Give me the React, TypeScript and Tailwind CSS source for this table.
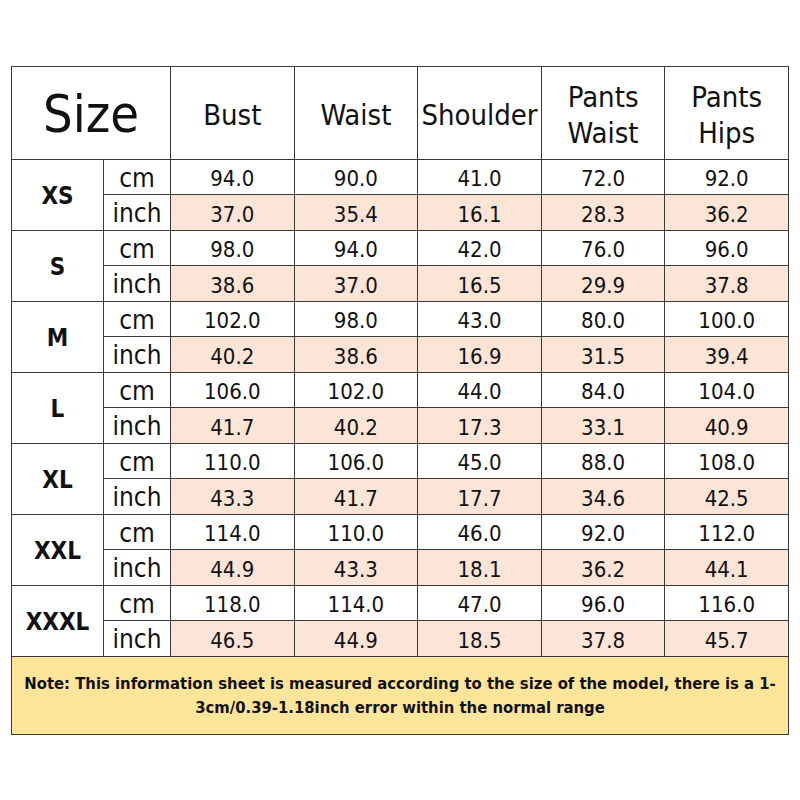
import React from "react";

const rows: [string, string[], string[]][] = [
  ["XS", ["94.0", "90.0", "41.0", "72.0", "92.0"], ["37.0", "35.4", "16.1", "28.3", "36.2"]],
  ["S", ["98.0", "94.0", "42.0", "76.0", "96.0"], ["38.6", "37.0", "16.5", "29.9", "37.8"]],
  ["M", ["102.0", "98.0", "43.0", "80.0", "100.0"], ["40.2", "38.6", "16.9", "31.5", "39.4"]],
  ["L", ["106.0", "102.0", "44.0", "84.0", "104.0"], ["41.7", "40.2", "17.3", "33.1", "40.9"]],
  ["XL", ["110.0", "106.0", "45.0", "88.0", "108.0"], ["43.3", "41.7", "17.7", "34.6", "42.5"]],
  ["XXL", ["114.0", "110.0", "46.0", "92.0", "112.0"], ["44.9", "43.3", "18.1", "36.2", "44.1"]],
  ["XXXL", ["118.0", "114.0", "47.0", "96.0", "116.0"], ["46.5", "44.9", "18.5", "37.8", "45.7"]],
];

const headers: string[][] = [["Bust"], ["Waist"], ["Shoulder"], ["Pants", "Waist"], ["Pants", "Hips"]];

export default function App() {
  return (
    <div
      className="w-[800px] h-[800px] bg-white pt-[66px] pl-[11px] text-[#111]"
      style={{ fontFamily: "'DejaVu Sans Condensed', 'DejaVu Sans', sans-serif" }}
    >
      <div className="w-[778px] bg-[#3a3a3a] p-px flex flex-col gap-px">
        <div className="grid grid-cols-[91px_66px_repeat(5,1fr)] grid-rows-[92px_repeat(7,34px_35px)] gap-px">
          <div className="col-span-2 bg-white flex items-center justify-center pt-[2px] text-[52px] leading-none">
            Size
          </div>
          {headers.map((h, i) => (
            <div key={i} className="bg-white flex flex-col items-center justify-center pt-[3px] text-[29px] leading-[36px]">
              {h.map((t) => (
                <span key={t}>{t}</span>
              ))}
            </div>
          ))}
          {rows.map(([size, cm, inch]) => (
            <React.Fragment key={size}>
              <div className="row-span-2 bg-white flex items-center justify-center pt-[2px] font-bold text-[24px]">{size}</div>
              <div className="bg-white flex items-center justify-center pt-[2px] text-[26px]">cm</div>
              {cm.map((v, i) => (
                <div key={"c" + i} className="bg-white flex items-center justify-center pt-[3px] text-[22px]">
                  {v}
                </div>
              ))}
              <div className="bg-white flex items-center justify-center pt-[2px] text-[26px]">inch</div>
              {inch.map((v, i) => (
                <div key={"i" + i} className="bg-[#fce4d6] flex items-center justify-center pt-[3px] text-[22px]">
                  {v}
                </div>
              ))}
            </React.Fragment>
          ))}
        </div>
        <div className="h-[77px] bg-[#ffe59a] flex items-center justify-center px-2 text-center font-bold text-[16.5px] leading-[24px]">
          Note: This information sheet is measured according to the size of the model, there is a 1-3cm/0.39-1.18inch error within the normal range
        </div>
      </div>
    </div>
  );
}
